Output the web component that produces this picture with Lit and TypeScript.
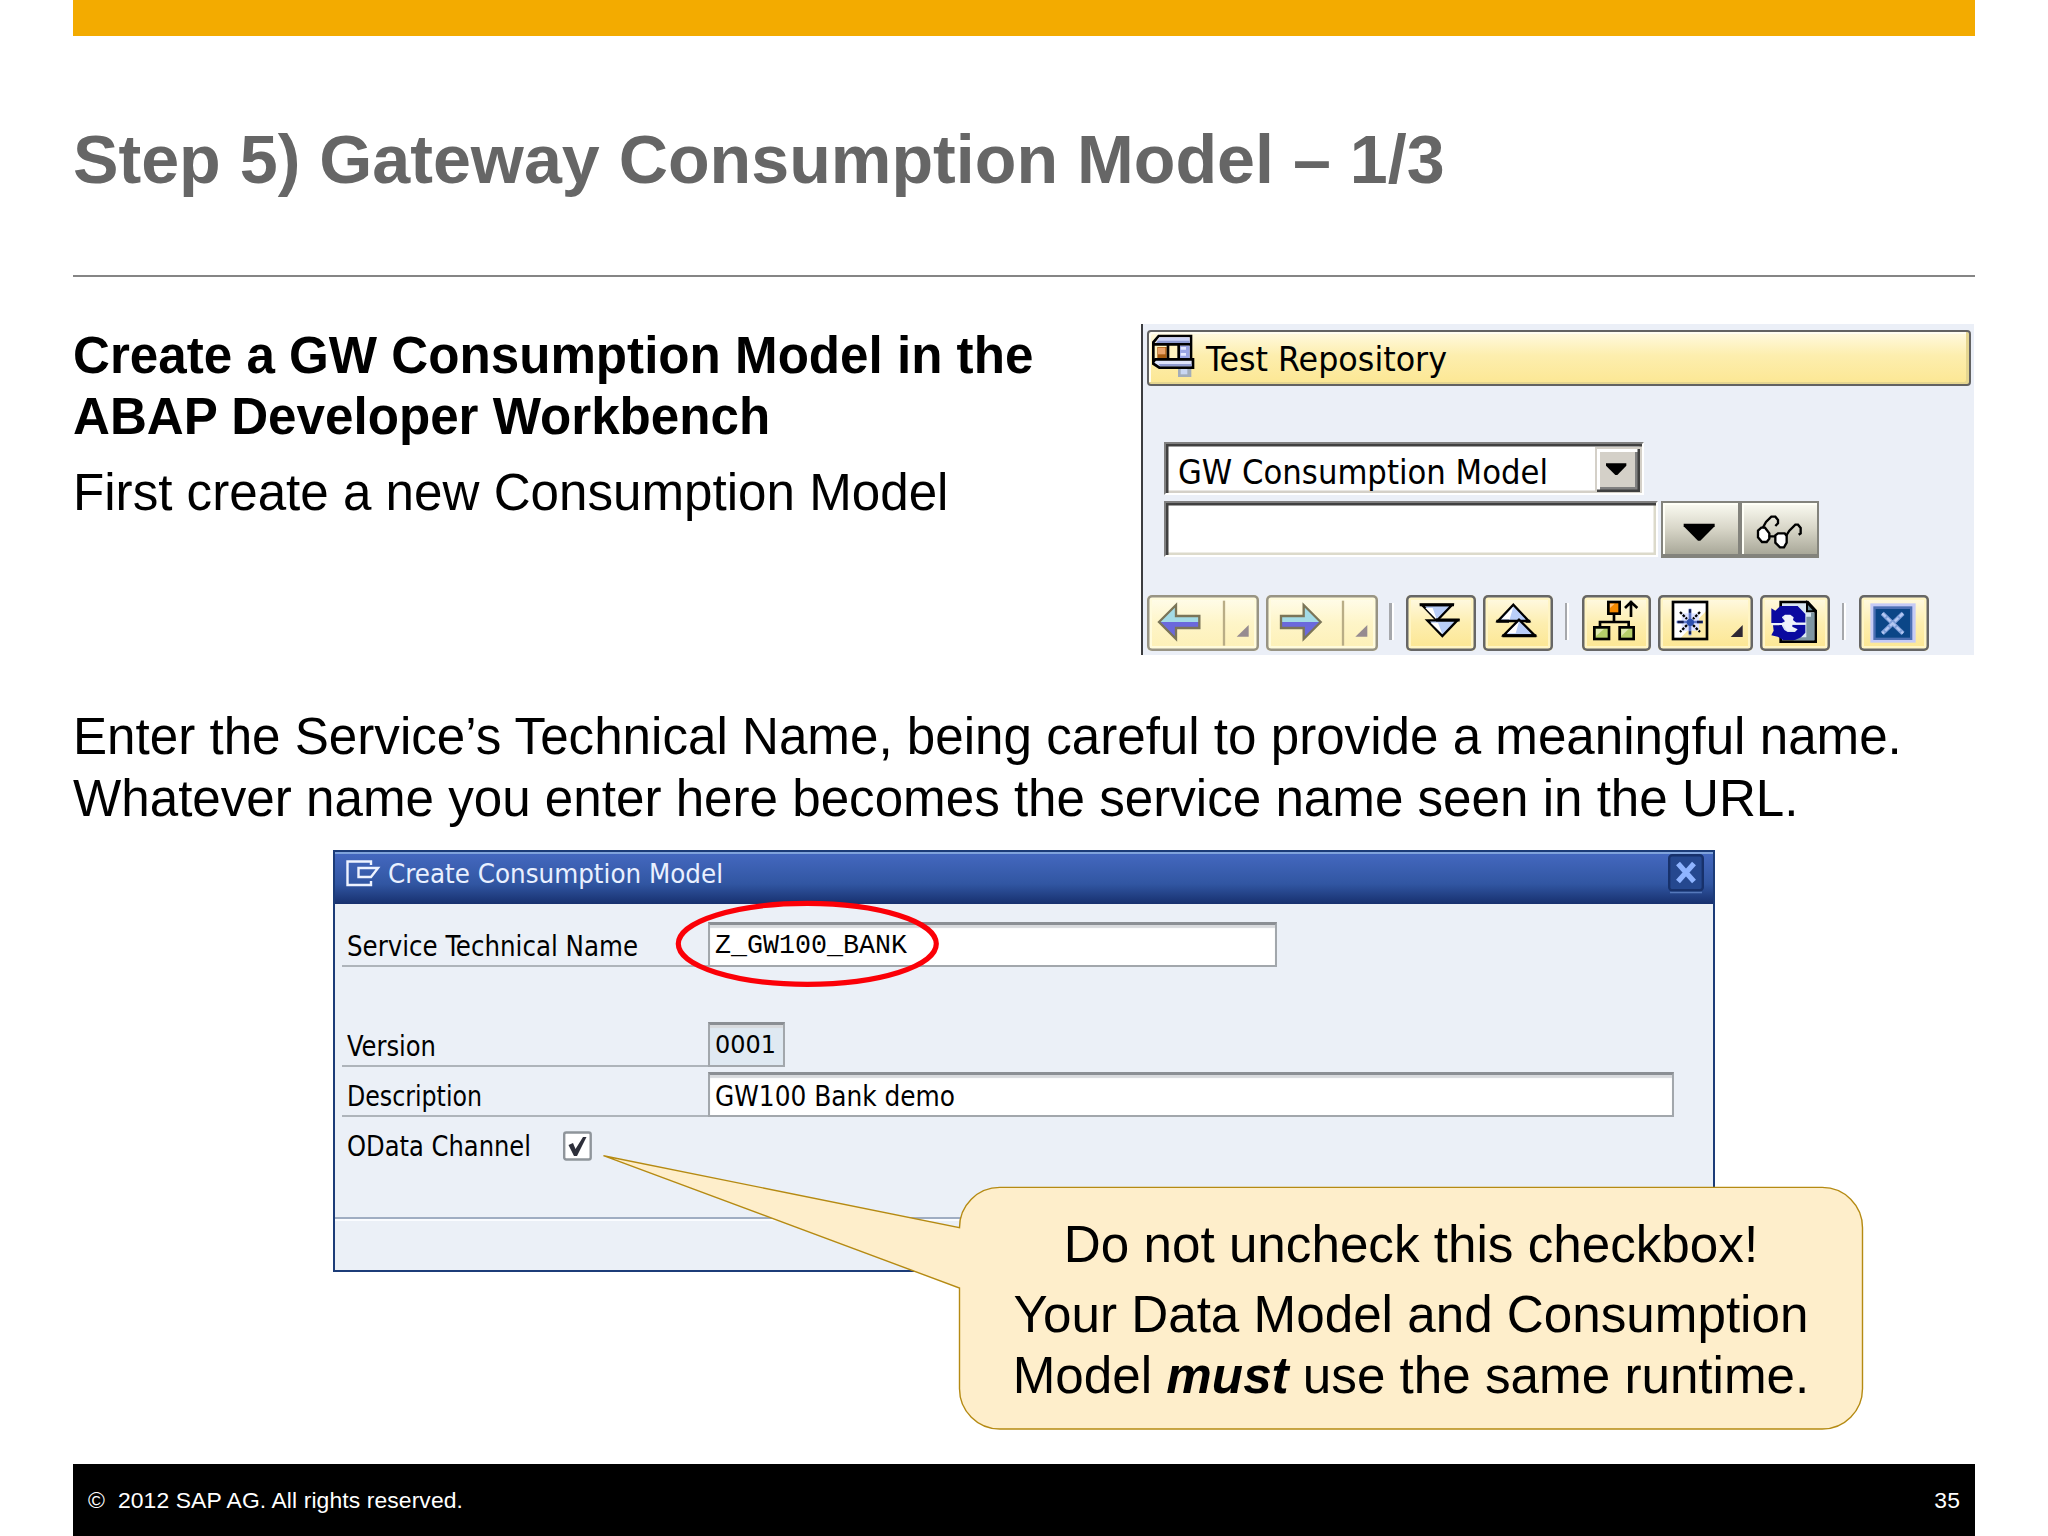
import { LitElement, html, css, svg } from "lit";
import { customElement } from "lit/decorators.js";

const SANS = "'DejaVu Sans Condensed','DejaVu Sans',sans-serif";
const MONO = "'Liberation Mono',monospace";

/** One line of text stretched to a known width; the svg box is `w` wide and `h` high, baseline at `b`. */
const fitted = (text: string, w: number, h: number, b: number, size: number, family = SANS) => html`
  <svg class="fit" width=${w} height=${h} viewBox="0 0 ${w} ${h}">
    <text x="0" y=${b} font-size=${size} font-family=${family} textLength=${w} lengthAdjust="spacingAndGlyphs">${text}</text>
  </svg>`;

/* Toolbar icons share one drawing space: three units per pixel, buttons from y 45 to 213. */
const icons = {
  back: svg`
    <path d="M57 126L108 75V108H179V126Z" fill="#a3dbe6"/><path d="M57 126H179V144H108V177Z" fill="#6b69dc"/>
    <path d="M57 126L108 75V108H178V144H108V177Z" fill="none" stroke="#7b7558" stroke-width="7"/>
    <path d="M252 62V197" stroke="#b9ad86" stroke-width="7"/><path d="M290 170L326 135V170Z" fill="#968b90"/>`,
  forward: svg`
    <path d="M543 126L490 75V108H421V126Z" fill="#a3dbe6"/><path d="M543 126H421V144H490V177Z" fill="#6b69dc"/>
    <path d="M541 126L490 75V108H422V144H490V177Z" fill="none" stroke="#7b7558" stroke-width="7"/>
    <path d="M608 62V197" stroke="#b9ad86" stroke-width="7"/><path d="M645 170L681 135V170Z" fill="#968b90"/>`,
  expand: svg`
    <path d="M848 75H938L893 122Z" fill="#b9cef8" stroke="#000" stroke-width="7"/>
    <path d="M858 84L893 120L880 84Z" fill="#fff"/>
    <path d="M864 121H954L909 168Z" fill="#b9cef8" stroke="#000" stroke-width="7"/>
    <path d="M874 128L909 162L896 128Z" fill="#fff"/>
    <path d="M841 74H944M890 120H961" stroke="#000" stroke-width="9"/>`,
  collapse: svg`
    <path d="M1075 123L1121 74L1167 123Z" fill="#b9cef8" stroke="#000" stroke-width="7"/>
    <path d="M1086 118L1121 80L1110 118Z" fill="#fff"/>
    <path d="M1092 166L1138 119L1185 166Z" fill="#b9cef8" stroke="#000" stroke-width="7"/>
    <path d="M1103 160L1138 125L1128 160Z" fill="#fff"/>
    <path d="M1070 124H1108M1158 124H1172M1088 167H1190" stroke="#000" stroke-width="9"/>`,
  tree: svg`
    <rect x="145" y="66" width="34" height="35" fill="#f68a00" stroke="#000" stroke-width="8"/><path d="M150 71H164L150 84Z" fill="#ffc27a"/>
    <path d="M162 104V126M120 140V126H206V140" fill="none" stroke="#000" stroke-width="8"/>
    <rect x="103" y="142" width="44" height="35" fill="#b5cf6a" stroke="#000" stroke-width="8"/><path d="M108 147H132L108 168Z" fill="#dfe9b0"/>
    <rect x="179" y="142" width="42" height="35" fill="#b5cf6a" stroke="#000" stroke-width="8"/><path d="M184 147H206L184 168Z" fill="#dfe9b0"/>
    <path d="M213 62V111M195 84L213 66L232 84" fill="none" stroke="#000" stroke-width="8"/>`,
  create: svg`
    <rect x="340" y="66" width="102" height="111" fill="#fff"/><path d="M442 90V177H360Z" fill="#fbe9a6"/>
    <rect x="340" y="66" width="102" height="111" fill="none" stroke="#000" stroke-width="8"/>
    <rect x="366" y="100" width="52" height="52" fill="#dfe3ff"/>
    <path d="M391 86V166M351 126H430" stroke="#5f78c8" stroke-width="8"/>
    <path d="M361 96L382 117M400 135L421 156M421 96L400 117M382 135L361 156" stroke="#000" stroke-width="7" stroke-dasharray="8 4"/>
    <path d="M391 88V98M391 154V162M354 126H372M412 126H429" stroke="#111b50" stroke-width="7"/>
    <circle cx="392" cy="127" r="11" fill="#2c4fae"/>
    <path d="M513 171L549 135V171Z" fill="#2e2733"/>`,
  refresh: svg`
    <path d="M661 66H742L766 92V185H661Z" fill="#d9e6f2" stroke="#000" stroke-width="8"/>
    <path d="M752 98H762V181H700V172H738V110H752Z" fill="#7e96a2"/><path d="M740 68V94H764Z" fill="#6d8c98" stroke="#000" stroke-width="6"/>
    <path d="M633 129H672V104H712V152H680L670 136H633Z" fill="#eef2fb"/>
    <path d="M633 85L645 92L660 78H712L735 102V128H708L698 120L700 112L690 104H674L664 112L674 124L664 129H633Z" fill="#0a0aa0"/>
    <path d="M638 136H664L672 150L682 156H704L712 148L696 140V134H735V158L722 172L704 180H668L652 170L633 166L640 152Z" fill="#0a0aa0"/>
    <path d="M690 131H736" stroke="#eef2fb" stroke-width="6"/>`,
  cancel: svg`
    <rect x="930" y="70" width="136" height="118" fill="#c6cbf6"/><rect x="939" y="79" width="117" height="101" fill="#4d70b4"/>
    <rect x="946" y="87" width="103" height="86" fill="#0b4687"/>
    <path d="M966 100L1028 160M1028 100L966 160" stroke="#7f9fd9" stroke-width="13"/>
    <path d="M966 100L1028 160M1028 100L966 160" stroke="#b4c8f2" stroke-width="7" stroke-dasharray="14 6"/>`,
};

const tool = (name: keyof typeof icons, x: number, w: number, dim = false) => html`
  <button class="tool ${dim ? "dim" : ""}" aria-label=${name}>
    <svg width=${w / 3} height="56" viewBox="${x} 45 ${w} 168">${icons[name]}</svg>
  </button>`;

@customElement("repository-panel")
class RepositoryPanel extends LitElement {
  static styles = css`
    :host { display: block; box-sizing: border-box; width: 833px; height: 331px; background: #ebeff7; border-left: 2.4px solid #3c3d40; padding: 6px 3px 0 4px; }
    svg { display: block; flex: none; overflow: visible; }
    .head { box-sizing: border-box; height: 56px; display: flex; align-items: flex-start; border: 2.5px solid #626262; border-radius: 4px; background: linear-gradient(#fffae0, #fdeeae 45%, #fce793); box-shadow: inset -3px -2px 0 #e5d691, inset 2px 2px 0 #fffdf0; padding: 1px 0 0 1px; gap: 10px; }
    .fields { padding: 56px 0 0 17px; }
    .select { box-sizing: border-box; width: 480px; height: 53px; display: flex; justify-content: space-between; background: #fff; border: 2.5px solid; border-color: #808080 #fff #fff #808080; box-shadow: inset 2.5px 2.5px 0 #404040, inset -2.5px -2.5px 0 #d4d0c8; padding: 3px 2px 2px 12px; }
    .drop { box-sizing: border-box; width: 45px; height: 45px; background: #d4d0c8; box-shadow: inset 2px 2px 0 #d4d0c8, inset -2.5px -2.5px 0 #404040, inset 5px 5px 0 #fff, inset -5px -5px 0 #808080; }
    .row { display: flex; height: 57px; margin-top: 6px; }
    .input { box-sizing: border-box; width: 494px; height: 56px; background: #fff; border: 2.5px solid; border-color: #808080 #fff #fff #808080; box-shadow: inset 2.5px 2.5px 0 #404040, inset -2.5px -2.5px 0 #dcdacb; margin-right: 3px; }
    .key { box-sizing: border-box; width: 79px; height: 57px; border: 2.4px solid #83837c; border-bottom-width: 4px; background: linear-gradient(#fbfbf2, #d8d6c8 50%, #a9a899); box-shadow: inset 2px 2px 0 #fffff6; }
    .key svg { margin: -2.4px; }
    .bar { display: flex; margin-top: 37px; height: 56px; }
    .tool { padding: 0; border: 0; border-radius: 5px; background: linear-gradient(#fffbe8, #fdeeb0 50%, #fce690); box-shadow: inset 0 0 0 2.5px #666, inset 0 0 0 5px #fff5c4; margin-right: 6.7px; }
    .dim { background: linear-gradient(#fffdee, #fef5c8 50%, #fdf0b6); box-shadow: inset 0 0 0 2.5px #989484, inset 0 0 0 5px #fffbdc; }
    .sep { width: 2.6px; height: 37px; background: #a6a8ac; border-right: 2px solid #fff; margin: 8px 12.4px 0 5px; }
  `;
  render() {
    return html`
      <div class="head">
        <svg width="46" height="46" viewBox="60 70 138 138">
          <path d="M70 156V98L86 79H183V150H78Z" fill="#fff3c0" stroke="#000" stroke-width="8"/>
          <path d="M76 100L88 83H179V100Z" fill="#ccd3f7"/><path d="M84 93H179V101H78Z" fill="#8f9bd0"/>
          <path d="M70 104H183" stroke="#000" stroke-width="8"/>
          <rect x="82" y="112" width="28" height="34" fill="#a85c10"/><path d="M84 114H106V134H84Z" fill="#e8a268"/>
          <path d="M114 104V148M146 104V148" stroke="#000" stroke-width="8"/>
          <rect x="150" y="108" width="29" height="40" fill="#9aa5e4"/><path d="M152 116H168M152 134H168" stroke="#e4e8ff" stroke-width="8"/>
          <path d="M70 156L76 149H189V174H88L70 162Z" fill="#dfe4fb" stroke="#000" stroke-width="8"/><path d="M86 163H185V170H90Z" fill="#8f9bd0"/>
          <rect x="144" y="178" width="40" height="24" fill="#a3adba"/><rect x="152" y="178" width="20" height="16" fill="#c9d6f2"/>
        </svg>
        ${fitted("Test Repository", 241, 46, 38, 33.5)}
      </div>
      <div class="fields">
        <div class="select">
          ${fitted("GW Consumption Model", 370, 44, 36.5, 33)}
          <div class="drop"><svg width="45" height="45" viewBox="137 415 135 135"><path d="M170 464H231V471L204 499H198L170 471Z" fill="#000"/></svg></div>
        </div>
        <div class="row">
          <div class="input"></div>
          <div class="key"><svg width="79" height="57" viewBox="332 575 237 171"><path d="M400 643H493V651L450 694H443L400 651Z" fill="#000"/></svg></div>
          <div class="key"><svg width="79" height="57" viewBox="570 575 237 171">
            <g fill="none" stroke="#000" stroke-width="7">
              <path d="M624 664L634 655H645L658 672V688L650 698H636L624 684Z" fill="#fff"/>
              <path d="M676 678L684 672H704L710 680V700L702 714H690L676 700Z" fill="#fff"/>
              <path d="M656 681H676M638 656L648 638L664 622H676L684 632V642L676 650M708 680L718 664L736 646H744L752 656V672L746 676"/>
            </g></svg></div>
        </div>
      </div>
      <div class="bar">
        ${tool("back", 21, 336, true)}${tool("forward", 377, 336, true)}
        <div class="sep"></div>
        ${tool("expand", 800, 210)}${tool("collapse", 1030, 210)}
        <div class="sep"></div>
        ${tool("tree", 66, 209)}${tool("create", 295, 286)}${tool("refresh", 599, 210)}
        <div class="sep"></div>
        ${tool("cancel", 896, 210)}
      </div>`;
  }
}

@customElement("create-dialog")
class CreateDialog extends LitElement {
  static styles = css`
    :host { display: block; box-sizing: border-box; width: 1382px; height: 422px; background: #ebf0f7; border: 2.4px solid #1c3c78; }
    svg { display: block; flex: none; overflow: visible; }
    .title { box-sizing: border-box; height: 52px; display: flex; align-items: flex-start; background: linear-gradient(#4468bf, #3156a2 60%, #17306e); border-top: 2px solid #7fa3dc; padding: 0 9px 0 11px; fill: #e9f0ff; }
    .title .fit { margin-left: 8px; }
    .x { margin-left: auto; }
    .rows { padding-left: 7px; }
    .row { box-sizing: border-box; height: 50px; padding-top: 5px; display: flex; }
    .name { box-sizing: border-box; width: 366px; height: 45px; padding-left: 5px; border-bottom: 2px solid #aeb4ba; display: flex; }
    .bare { border-color: transparent; width: 221px; }
    .field { box-sizing: border-box; height: 45px; background: #fff; border: 2px solid #a2a7ac; border-top: 3px solid #8b8f94; box-shadow: inset 0 3px 1px #d8dadd; padding-left: 5px; }
    .w1 { width: 569px; } .w2 { width: 77px; background: #dfe9f2; } .w3 { width: 966px; }
    .first { padding-top: 18px; height: 113px; }
    .line { height: 2px; background: #9fadc2; border-bottom: 2px solid #fafcff; margin-top: 50px; }
  `;
  render() {
    return html`
      <div class="title">
        <svg width="34" height="50" viewBox="0 0 34 50"><g fill="none" stroke="#eef3ff" stroke-width="2.4">
          <path d="M25 11V7.5H1.5V31H25V27"/><path d="M12.5 14H32L25 23H12.5Z"/></g></svg>
        ${fitted("Create Consumption Model", 335, 48, 28.5, 27)}
        <svg class="x" width="36" height="40" viewBox="0 0 36 40">
          <rect x="1.2" y="1.2" width="33.6" height="35" rx="3" fill="#25488f" stroke="#17316b" stroke-width="2.4"/>
          <path d="M2 38.5H34" stroke="#5578bb" stroke-width="1.5"/>
          <path d="M10 9.5L26 27.5M26 9.5L10 27.5" stroke="#8fb4ff" stroke-width="5.2"/></svg>
      </div>
      <div class="rows">
        <div class="row first">
          <div class="name">${fitted("Service Technical Name", 291, 44, 33.5, 27.5)}</div>
          <div class="field w1">${fitted("Z_GW100_BANK", 192, 40, 28, 28, MONO)}</div>
        </div>
        <div class="row">
          <div class="name">${fitted("Version", 89, 44, 33.5, 27.5)}</div>
          <div class="field w2">${fitted("0001", 61, 40, 28, 25)}</div>
        </div>
        <div class="row">
          <div class="name">${fitted("Description", 135, 44, 33.5, 27.5)}</div>
          <div class="field w3">${fitted("GW100 Bank demo", 240, 40, 31, 27.5)}</div>
        </div>
        <div class="row">
          <div class="name bare">${fitted("OData Channel", 184, 44, 33.5, 27.5)}</div>
          <svg width="29" height="45" viewBox="0 0 29 45">
            <rect x="1.2" y="10.5" width="26.5" height="27" rx="2" fill="#fff" stroke="#8f959b" stroke-width="2.4"/>
            <path d="M5.5 23L10 21L12.5 27L20 15H23.5L14 34H11Z" fill="#2d2f3a"/></svg>
        </div>
      </div>
      <div class="line"></div>`;
  }
}

@customElement("app-root")
class AppRoot extends LitElement {
  static styles = css`
    :host { display: flex; flex-direction: column; position: relative; box-sizing: border-box; width: 2048px; height: 1536px; padding: 0 73px 0 72.5px; overflow: hidden; background: #fff; color: #000; font-family: "Liberation Sans", Arial, sans-serif; }
    .band { height: 36.4px; background: #f3ab00; flex: none; }
    h1 { box-sizing: border-box; flex: none; height: 240.6px; margin: 0; padding: 83px 0 0 0.5px; font-size: 68.2px; line-height: 80px; color: #666; border-bottom: 2px solid #858585; white-space: nowrap; }
    .top { display: flex; justify-content: space-between; height: 331px; margin-top: 47px; margin-right: 1px; flex: none; }
    p, h2 { margin: 0; font-size: 51.15px; line-height: 61.44px; white-space: nowrap; }
    h2, .top p, .note { padding-left: 0.5px; }
    h2 { padding-top: 0.6px; }
    h2 + p { margin-top: 14.5px; }
    .note { margin-top: 51.1px; }
    create-dialog { margin: 21.5px 0 0 260.5px; flex: none; }
    footer { box-sizing: border-box; height: 72.5px; margin-top: auto; flex: none; display: flex; justify-content: space-between; background: #000; color: #fff; font-size: 22.9px; letter-spacing: 0.1px; line-height: 28px; padding: 22.5px 15px 0 15.5px; white-space: pre; }
    .over { position: absolute; left: 0; top: 0; pointer-events: none; }
    .callout { position: absolute; left: 959.5px; top: 1187px; width: 903px; height: 242px; box-sizing: border-box; padding-top: 27px; text-align: center; }
    .callout p { font-size: 51.2px; }
    .callout p + p { margin-top: 8.5px; }
  `;
  render() {
    return html`
      <div class="band"></div>
      <h1>Step 5) Gateway Consumption Model – 1/3</h1>
      <div class="top">
        <div>
          <h2>Create a GW Consumption Model in the<br>ABAP Developer Workbench</h2>
          <p>First create a new Consumption Model</p>
        </div>
        <repository-panel></repository-panel>
      </div>
      <p class="note">Enter the Service’s Technical Name, being careful to provide a meaningful name.<br>Whatever name you enter here becomes the service name seen in the URL.</p>
      <create-dialog></create-dialog>
      <footer><span>©  2012 SAP AG. All rights reserved.</span><span>35</span></footer>
      <svg class="over" width="2048" height="1536" viewBox="0 0 2048 1536">
        <ellipse cx="807.3" cy="943.8" rx="129" ry="40.5" fill="none" stroke="#fb0007" stroke-width="5.2"/>
        <path d="M959.5 1227.7A40.3 40.3 0 0 1 999.8 1187.4H1822.2A40.3 40.3 0 0 1 1862.5 1227.7V1388.7A40.3 40.3 0 0 1 1822.2 1429H999.8A40.3 40.3 0 0 1 959.5 1388.7V1288L603.5 1155.7Z" fill="#feeecb" stroke="#b58a12" stroke-width="1.4"/>
      </svg>
      <div class="callout">
        <p>Do not uncheck this checkbox!</p>
        <p>Your Data Model and Consumption<br>Model <b><i>must</i></b> use the same runtime.</p>
      </div>`;
  }
}
